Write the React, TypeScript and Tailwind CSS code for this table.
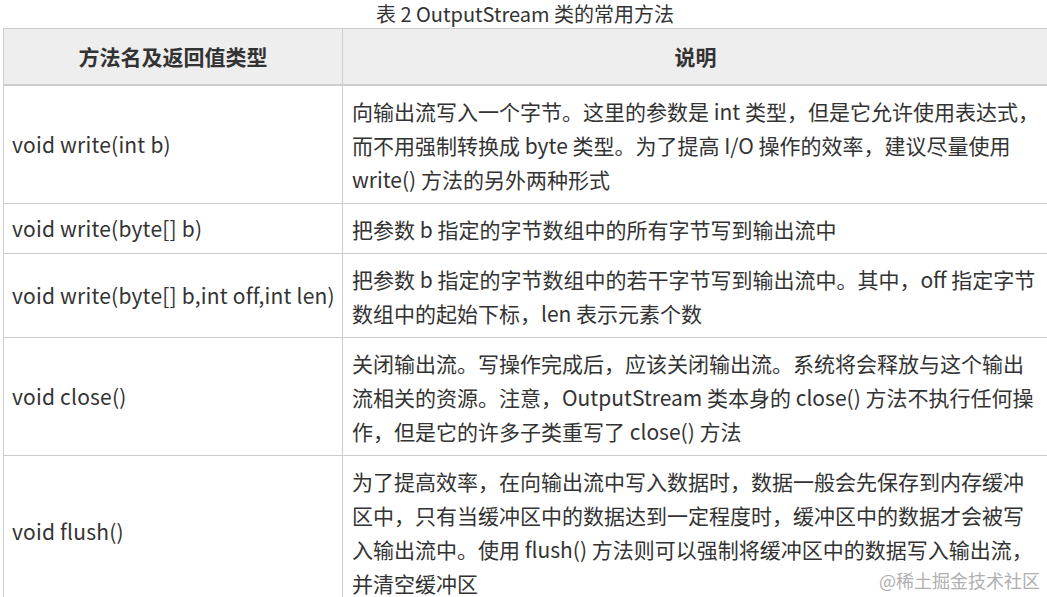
import React from "react";

const rows: { name: string; lines: string[] }[] = [
  {
    name: "void write(int b)",
    lines: [
      "向输出流写入一个字节。这里的参数是 int 类型，但是它允许使用表达式，",
      "而不用强制转换成 byte 类型。为了提高 I/O 操作的效率，建议尽量使用",
      "write() 方法的另外两种形式",
    ],
  },
  { name: "void write(byte[] b)", lines: ["把参数 b 指定的字节数组中的所有字节写到输出流中"] },
  {
    name: "void write(byte[] b,int off,int len)",
    lines: [
      "把参数 b 指定的字节数组中的若干字节写到输出流中。其中，off 指定字节",
      "数组中的起始下标，len 表示元素个数",
    ],
  },
  {
    name: "void close()",
    lines: [
      "关闭输出流。写操作完成后，应该关闭输出流。系统将会释放与这个输出",
      "流相关的资源。注意，OutputStream 类本身的 close() 方法不执行任何操",
      "作，但是它的许多子类重写了 close() 方法",
    ],
  },
  {
    name: "void flush()",
    lines: [
      "为了提高效率，在向输出流中写入数据时，数据一般会先保存到内存缓冲",
      "区中，只有当缓冲区中的数据达到一定程度时，缓冲区中的数据才会被写",
      "入输出流中。使用 flush() 方法则可以强制将缓冲区中的数据写入输出流，",
      "并清空缓冲区",
    ],
  },
];

export default function App() {
  return (
    <div
      className="relative w-[1047px] h-[597px] overflow-hidden bg-white text-[#333333]"
      style={{ fontFamily: '"Noto Sans CJK SC", "Noto Sans", sans-serif' }}
    >
      <div className="h-[28px] text-center text-[20px] leading-[27px] text-[#333] pl-[3px]">
        表 2 OutputStream 类的常用方法
      </div>
      <div className="ml-[3px] w-[1060px] border-t border-l border-[#cccccc]">
        <div className="grid grid-cols-[339px_1fr] bg-[#eeeeee] border-b-2 border-[#cccccc] h-[57px]">
          <div className="flex items-center justify-center border-r border-[#cccccc] font-bold text-[21px]">
            方法名及返回值类型
          </div>
          <div className="flex items-center justify-center font-bold text-[21px] pr-[15px]">说明</div>
        </div>
        {rows.map((r) => (
          <div key={r.name} className="grid grid-cols-[339px_1fr] border-b border-[#cccccc]">
            <div className="flex items-center border-r border-[#cccccc] pl-[8px] text-[21px] tracking-[0.2px] whitespace-nowrap">
              {r.name}
            </div>
            <div className="pt-[8px] pb-[7px] pl-[9px] text-[21px]">
              {r.lines.map((l, i) => (
                <div key={i} className="h-[34px] leading-[34px] whitespace-nowrap">
                  {l}
                </div>
              ))}
            </div>
          </div>
        ))}
      </div>
      <div className="absolute right-[7px] bottom-[7px] text-[18px] leading-[20px] text-[#b0b0b0]">
        @稀土掘金技术社区
      </div>
    </div>
  );
}
